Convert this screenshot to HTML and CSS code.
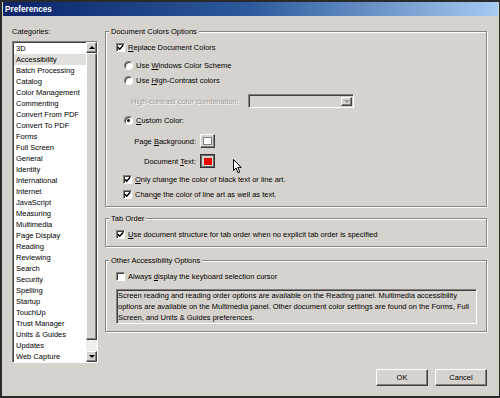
FILE: index.html
```html
<!DOCTYPE html>
<html>
  <head>
    <link rel="stylesheet" href="styles.css">
    <title>Preferences</title>
  </head>
  <body>
    <div class="window">
      <div class="titlebar">Preferences</div>

      <div class="main">
        <div class="categories">
          <label class="categories-label">Categories:</label>
          <div class="listbox">
            <div class="items">
              <div class="item">3D</div>
              <div class="item selected">Accessibility</div>
              <div class="item">Batch Processing</div>
              <div class="item">Catalog</div>
              <div class="item">Color Management</div>
              <div class="item">Commenting</div>
              <div class="item">Convert From PDF</div>
              <div class="item">Convert To PDF</div>
              <div class="item">Forms</div>
              <div class="item">Full Screen</div>
              <div class="item">General</div>
              <div class="item">Identity</div>
              <div class="item">International</div>
              <div class="item">Internet</div>
              <div class="item">JavaScript</div>
              <div class="item">Measuring</div>
              <div class="item">Multimedia</div>
              <div class="item">Page Display</div>
              <div class="item">Reading</div>
              <div class="item">Reviewing</div>
              <div class="item">Search</div>
              <div class="item">Security</div>
              <div class="item">Spelling</div>
              <div class="item">Startup</div>
              <div class="item">TouchUp</div>
              <div class="item">Trust Manager</div>
              <div class="item">Units &amp; Guides</div>
              <div class="item">Updates</div>
              <div class="item">Web Capture</div>
            </div>
            <div class="scrollbar">
              <div class="sb-btn"><span class="arrow-up"></span></div>
              <div class="sb-thumb"></div>
              <div class="sb-track"></div>
              <div class="sb-btn"><span class="arrow-down"></span></div>
            </div>
          </div>
        </div>

        <div class="panels">
          <fieldset class="group">
            <legend>Document Colors Options</legend>
            <div class="row mt5 ind10">
              <span class="check"><svg width="7" height="7" viewBox="0 0 7 7"><path d="M0.8 3.2 L2.7 5.2 L6.2 1.2" fill="none" stroke="#000" stroke-width="1.5"/></svg></span>
              <span><u>R</u>eplace Document Colors</span>
            </div>
            <div class="row mt7 ind18">
              <span class="radio"></span>
              <span>Use <u>W</u>indows Color Scheme</span>
            </div>
            <div class="row mt4 ind18">
              <span class="radio"></span>
              <span>Use <u>H</u>igh-Contrast colors</span>
            </div>
            <div class="row tall mt8 ind25">
              <span class="combo-label disabled">High-contrast color combination:</span>
              <span class="combo">
                <span class="combo-btn"><span class="arrow-down grey"></span></span>
              </span>
            </div>
            <div class="row mt7 ind18">
              <span class="radio on"></span>
              <span><u>C</u>ustom Color:</span>
            </div>
            <div class="row swatch-row mt8 ind20">
              <span class="swatch-label">Page <u>B</u>ackground:</span>
              <span class="swatch"><span class="swatch-white"></span></span>
            </div>
            <div class="row swatch-row mt6 ind20">
              <span class="swatch-label">Document <u>T</u>ext:</span>
              <span class="swatch pressed"><span class="swatch-red"></span></span>
            </div>
            <div class="row mt6 ind17">
              <span class="check"><svg width="7" height="7" viewBox="0 0 7 7"><path d="M0.8 3.2 L2.7 5.2 L6.2 1.2" fill="none" stroke="#000" stroke-width="1.5"/></svg></span>
              <span><u>O</u>nly change the color of black text or line art.</span>
            </div>
            <div class="row mt4 ind17 last">
              <span class="check"><svg width="7" height="7" viewBox="0 0 7 7"><path d="M0.8 3.2 L2.7 5.2 L6.2 1.2" fill="none" stroke="#000" stroke-width="1.5"/></svg></span>
              <span>Chan<u>g</u>e the color of line art as well as text.</span>
            </div>
          </fieldset>

          <fieldset class="group tab-group">
            <legend>Tab Order</legend>
            <div class="row mt5 ind10 last">
              <span class="check"><svg width="7" height="7" viewBox="0 0 7 7"><path d="M0.8 3.2 L2.7 5.2 L6.2 1.2" fill="none" stroke="#000" stroke-width="1.5"/></svg></span>
              <span><u>U</u>se document structure for tab order when no explicit tab order is specified</span>
            </div>
          </fieldset>

          <fieldset class="group other-group">
            <legend>Other Accessibility Options</legend>
            <div class="row mt5 ind10">
              <span class="check"></span>
              <span>Always <u>d</u>isplay the keyboard selection cursor</span>
            </div>
            <div class="info">
              Screen reading and reading order options are available on the Reading panel. Multimedia accessibility<br>
              options are available on the Multimedia panel. Other document color settings are found on the Forms, Full<br>
              Screen, and Units &amp; Guides preferences.
            </div>
          </fieldset>
        </div>
      </div>

      <div class="footer">
        <button class="btn">OK</button>
        <button class="btn">Cancel</button>
      </div>

      <svg class="cursor" width="10" height="15" viewBox="0 0 10 15">
        <path d="M0.5 0.5 L0.5 11.5 L3 9 L5 13.8 L6.8 13 L4.8 8.4 L8.2 8.4 Z" fill="#fff" stroke="#000" stroke-width="1"/>
      </svg>
    </div>
  </body>
</html>
```

FILE: styles.css
```css
* {
  box-sizing: border-box;
}

body {
  margin: 0;
  font-family: "Liberation Sans", Arial, sans-serif;
  font-size: 7.5px;
  color: #000;
}

.window {
  position: relative;
  width: 500px;
  height: 398px;
  background: #d6d3ce;
  border: 2px solid #2a2a2a;
  border-right-width: 1px;
  display: flex;
  flex-direction: column;
}

.titlebar {
  height: 14px;
  margin: 0 1px;
  padding-left: 2px;
  display: flex;
  align-items: center;
  background: linear-gradient(to right, #0a246a, #2d5a9c 50%, #a6caf0);
  color: #fff;
  font-weight: bold;
  font-size: 8.2px;
}

.main {
  display: flex;
  padding: 10px 0 0 10px;
}

/* categories list */
.categories {
  width: 86px;
  display: flex;
  flex-direction: column;
}

.categories-label {
  line-height: 11px;
}

.listbox {
  margin-top: 4px;
  height: 322px;
  display: flex;
  background: #fff;
  border: 1px solid;
  border-color: #808080 #fff #fff #808080;
  box-shadow: inset 1px 1px 0 #404040;
}

.items {
  flex: 1;
  padding: 1px 0 0 1px;
  overflow: hidden;
}

.item {
  line-height: 11px;
  padding-left: 2px;
  white-space: nowrap;
}

.item.selected {
  background: #e2e0dc;
}

.scrollbar {
  width: 11px;
  display: flex;
  flex-direction: column;
  background: #f0efec;
}

.sb-btn,
.sb-thumb {
  background: #d6d3ce;
  border: 1px solid;
  border-color: #fff #404040 #404040 #fff;
  box-shadow: inset -1px -1px 0 #808080;
}

.sb-btn {
  height: 11px;
  display: flex;
  align-items: center;
  justify-content: center;
}

.sb-thumb {
  height: 287px;
}

.sb-track {
  flex: 1;
}

.arrow-up,
.arrow-down {
  width: 0;
  height: 0;
  border-left: 3px solid transparent;
  border-right: 3px solid transparent;
}

.arrow-up {
  border-bottom: 3px solid #000;
}

.arrow-down {
  border-top: 3px solid #000;
}

.arrow-down.grey {
  border-top-color: #9a9894;
}

/* option groups */
.panels {
  margin-left: 7px;
  width: 382px;
  display: flex;
  flex-direction: column;
}

.group {
  margin: 0;
  padding: 0 0 6px 0;
  border: 1px solid #868480;
  box-shadow: 1px 1px 0 #fff, inset 1px 1px 0 #fff;
  min-width: 0;
}

.group legend {
  margin-left: 3px;
  padding: 0 2px;
  line-height: 11px;
  background: #d6d3ce;
}

.tab-group {
  margin-top: 6px;
}

.other-group {
  margin-top: 8px;
  padding-bottom: 7px;
}

.row {
  display: flex;
  align-items: center;
  height: 11px;
  white-space: nowrap;
}

.row.tall {
  height: 14px;
}

.row.swatch-row {
  height: 14px;
}

.mt4 { margin-top: 4px; }
.mt5 { margin-top: 5px; }
.mt6 { margin-top: 6px; }
.mt7 { margin-top: 7px; }
.mt8 { margin-top: 8px; }

.ind10 { margin-left: 10px; }
.ind17 { margin-left: 17px; }
.ind18 { margin-left: 18px; }
.ind20 { margin-left: 20px; }
.ind25 { margin-left: 25px; }

.check {
  width: 9px;
  height: 9px;
  margin-right: 3px;
  display: flex;
  align-items: center;
  justify-content: center;
  background: #fff;
  border: 1px solid;
  border-color: #808080 #fff #fff #808080;
  box-shadow: inset 1px 1px 0 #404040;
}

.radio {
  position: relative;
  width: 9px;
  height: 9px;
  margin-right: 3px;
  border-radius: 50%;
  background: #fff;
  border: 1px solid;
  border-color: #808080 #fff #fff #808080;
  box-shadow: inset 1px 1px 0 #404040;
}

.radio.on::after {
  content: "";
  position: absolute;
  left: 2px;
  top: 2px;
  width: 3px;
  height: 3px;
  border-radius: 50%;
  background: #000;
}

.disabled {
  color: #9c9a96;
  text-shadow: 1px 1px 0 #fff;
}

.combo-label {
  width: 117px;
}

.combo {
  width: 106px;
  height: 14px;
  display: flex;
  justify-content: flex-end;
  padding: 1px;
  background: #d6d3ce;
  border: 1px solid;
  border-color: #808080 #fff #fff #808080;
  box-shadow: inset 1px 1px 0 #404040;
}

.combo-btn {
  width: 11px;
  margin: 1px 0 0 0;
  display: flex;
  align-items: center;
  justify-content: center;
  background: #d6d3ce;
  border: 1px solid;
  border-color: #fff #404040 #404040 #fff;
  box-shadow: inset -1px -1px 0 #808080;
}

.swatch-label {
  width: 70px;
  text-align: right;
}

.swatch {
  width: 15px;
  height: 14px;
  margin-left: 4px;
  display: flex;
  align-items: center;
  justify-content: center;
  background: #d6d3ce;
  border: 1px solid;
  border-color: #fff #404040 #404040 #fff;
  box-shadow: inset -1px -1px 0 #808080;
}

.swatch.pressed {
  border-color: #303030;
  box-shadow: inset 0 0 0 1px #6a6a6a;
}

.swatch-white {
  width: 9px;
  height: 8px;
  background: #fff;
  border: 1px solid #808080;
}

.swatch-red {
  width: 8px;
  height: 7px;
  background: #f40000;
}

.info {
  margin: 7px 0 0 10px;
  width: 361px;
  height: 35px;
  padding-left: 1px;
  line-height: 11px;
  white-space: nowrap;
  overflow: hidden;
  border: 1px solid;
  border-color: #808080 #fff #fff #808080;
  box-shadow: inset 1px 1px 0 #404040;
}

/* buttons */
.footer {
  display: flex;
  justify-content: flex-end;
  gap: 7px;
  margin-top: 6px;
  padding-right: 12px;
}

.btn {
  width: 52px;
  height: 17px;
  padding: 0;
  font-family: inherit;
  font-size: inherit;
  color: #000;
  background: #d6d3ce;
  border: 1px solid;
  border-color: #fff #404040 #404040 #fff;
  box-shadow: inset -1px -1px 0 #808080;
}

.cursor {
  position: absolute;
  left: 231px;
  top: 157px;
}
```
